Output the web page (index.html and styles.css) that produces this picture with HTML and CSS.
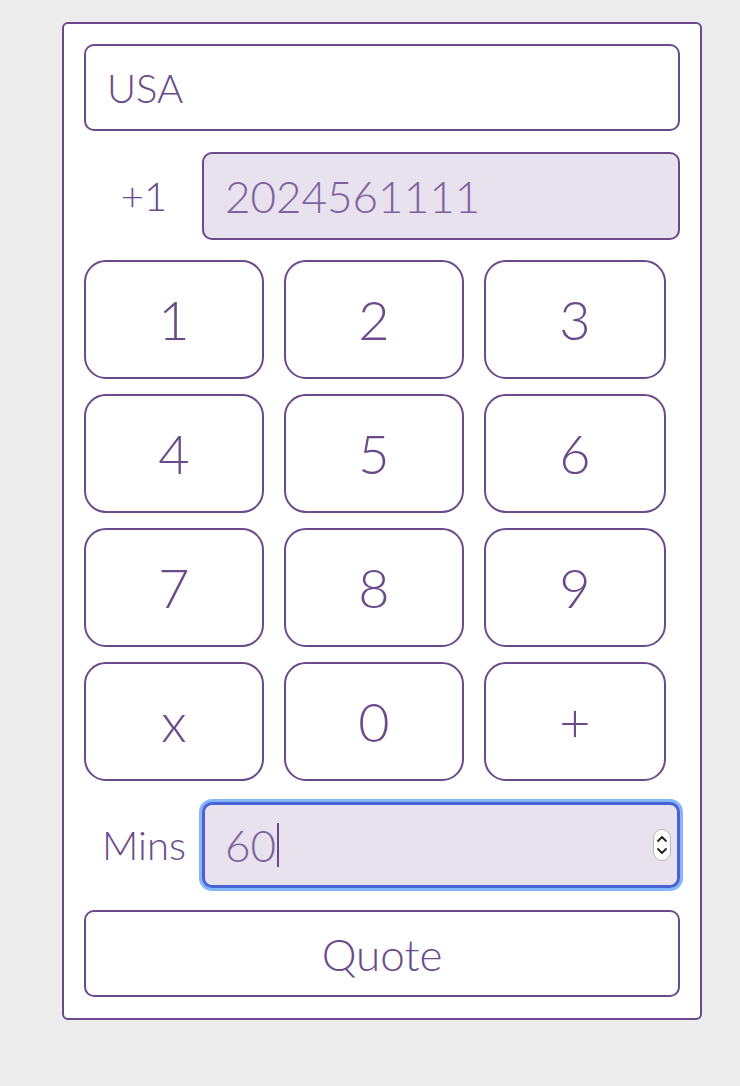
FILE: index.html
```html
<!DOCTYPE html>
<html>
<head>
<meta charset="utf-8">
<link rel="stylesheet" href="styles.css">
</head>
<body>
<div class="card">
  <div class="field country">USA</div>
  <div class="row phone-row">
    <div class="label">+1</div>
    <div class="field filled phone">2024561111</div>
  </div>
  <div class="keypad">
    <button class="key">1</button>
    <button class="key">2</button>
    <button class="key">3</button>
    <button class="key">4</button>
    <button class="key">5</button>
    <button class="key">6</button>
    <button class="key">7</button>
    <button class="key">8</button>
    <button class="key">9</button>
    <button class="key">x</button>
    <button class="key">0</button>
    <button class="key">+</button>
  </div>
  <div class="row mins-row">
    <div class="label">Mins</div>
    <div class="field filled mins focused">
      <span class="value">60</span><span class="caret"></span>
      <span class="spinner">
        <svg width="18" height="32" viewBox="0 0 18 32">
          <rect x="0.5" y="0.5" width="17" height="31" rx="8.5" fill="#fff" stroke="#b8b8c0"/>
          <path d="M5 12 L9 8 L13 12" fill="none" stroke="#222" stroke-width="1.8" stroke-linecap="round" stroke-linejoin="round"/>
          <path d="M5 20 L9 24 L13 20" fill="none" stroke="#222" stroke-width="1.8" stroke-linecap="round" stroke-linejoin="round"/>
        </svg>
      </span>
    </div>
  </div>
  <button class="quote">Quote</button>
</div>
</body>
</html>
```
FILE: styles.css
```css
* { box-sizing: border-box; }
html, body {
  margin: 0;
  padding: 0;
  background: #ececec;
  font-family: Lato, "Open Sans", sans-serif;
  font-weight: 300;
  color: #6a4a8b;
}
.card {
  margin: 22px 0 0 62px;
  width: 640px;
  height: 998px;
  background: #fff;
  border: 2px solid #6a4a8b;
  border-radius: 6px;
  padding: 20px;
  display: flex;
  flex-direction: column;
}
.field {
  border: 2px solid #6a4a8b;
  border-radius: 10px;
  background: #fff;
  display: flex;
  align-items: center;
  padding-left: 21px;
  font-size: 40px;
  font-weight: 300;
  color: #6a4a8b;
}
.country {
  height: 87px;
  width: 596px;
}
.row {
  display: flex;
  align-items: center;
}
.label {
  width: 118px;
  text-align: center;
  font-size: 40px;
  font-weight: 300;
  padding-left: 2px;
}
.phone-row {
  margin-top: 21px;
  height: 88px;
}
.filled {
  background: #e8e2ee;
  width: 478px;
  height: 100%;
}
.phone {
  font-weight: 300;
  font-size: 44px;
  color: #7d62a0;
}
.keypad {
  margin-top: 20px;
  display: grid;
  grid-template-columns: 180px 180px 182px;
  grid-auto-rows: 119px;
  column-gap: 20px;
  row-gap: 15px;
}
.key {
  font-family: Lato, sans-serif;
  font-weight: 300;
  font-size: 54px;
  color: #6a4a8b;
  background: #fff;
  border: 2px solid #6a4a8b;
  border-radius: 22px;
  padding: 0;
}
.mins-row {
  margin-top: 21px;
  height: 86px;
}
.mins {
  position: relative;
  font-weight: 300;
  font-size: 44px;
  color: #7d62a0;
}
.focused {
  border: 3px solid #4a63d0;
  box-shadow: 0 0 0 3px #86b6fa;
  padding-left: 20px;
}
.caret {
  display: inline-block;
  width: 2px;
  height: 44px;
  background: #6a4a8b;
  margin-left: 1px;
}
.spinner {
  position: absolute;
  right: 6px;
  top: 24px;
  display: block;
  height: 32px;
}
.spinner svg { display: block; }
.quote {
  margin-top: 22px;
  height: 87px;
  width: 596px;
  font-family: Lato, sans-serif;
  font-weight: 300;
  font-size: 44px;
  color: #6a4a8b;
  background: #fff;
  border: 2px solid #6a4a8b;
  border-radius: 10px;
  padding: 0;
}
```
